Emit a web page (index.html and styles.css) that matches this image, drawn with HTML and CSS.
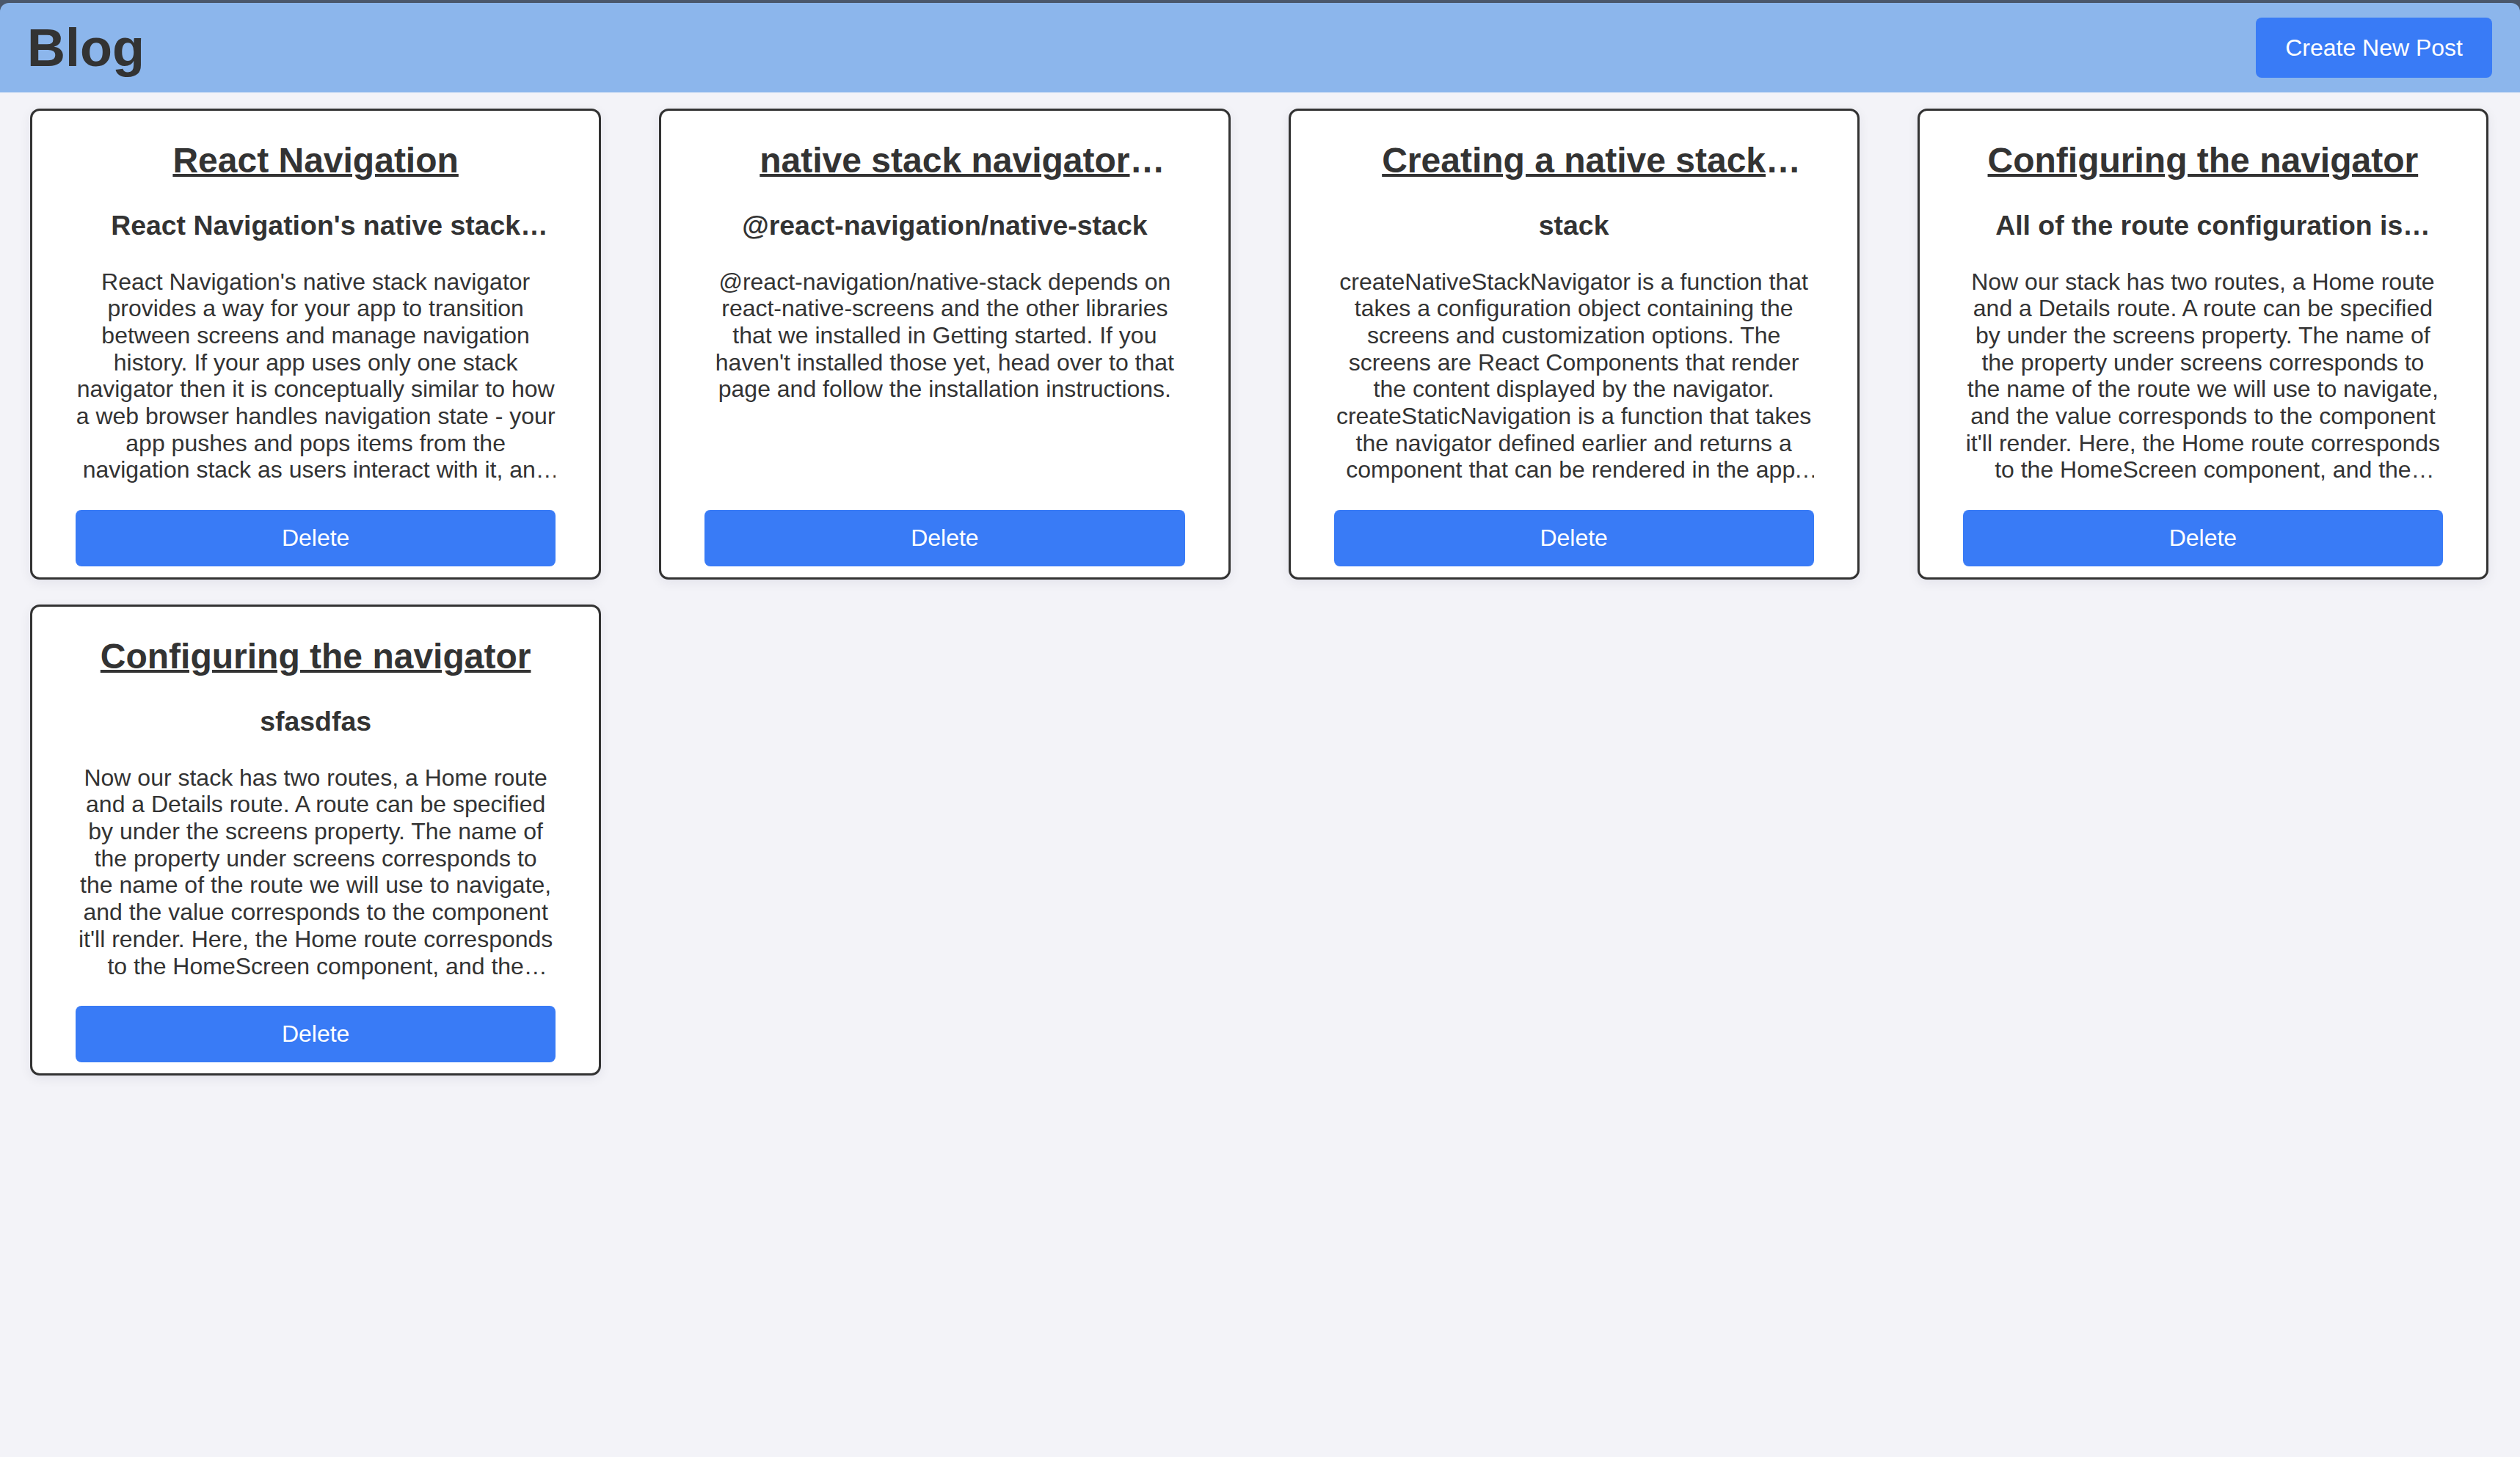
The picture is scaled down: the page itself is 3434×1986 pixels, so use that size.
FILE: index.html
```html
<!DOCTYPE html>
<html lang="en">
<head>
<meta charset="utf-8">
<title>Blog</title>
<link rel="stylesheet" href="styles.css">
</head>
<body>
<div class="topbar">
  <header class="header">
    <h1 class="brand">Blog</h1>
    <button class="create-btn">Create New Post</button>
  </header>
</div>
<main class="grid">
  <article class="card">
    <h2 class="title"><a href="#">React Navigation</a></h2>
    <h3 class="subtitle">React Navigation's native stack<span class="ell">…</span></h3>
    <div class="body-wrap">
      <p class="body">React Navigation's native stack navigator provides a way for your app to transition between screens and manage navigation history. If your app uses only one stack navigator then it is conceptually similar to how a web browser handles navigation state - your app pushes and pops items from the navigation stack as users interact with it, and this results in the user seeing different screens.</p>
    </div>
    <button class="delete">Delete</button>
  </article>
  <article class="card">
    <h2 class="title"><a href="#">native stack navigator</a><span class="ell">…</span></h2>
    <h3 class="subtitle">@react-navigation/native-stack</h3>
    <div class="body-wrap">
      <p class="body">@react-navigation/native-stack depends on react-native-screens and the other libraries that we installed in Getting started. If you haven't installed those yet, head over to that page and follow the installation instructions.</p>
    </div>
    <button class="delete">Delete</button>
  </article>
  <article class="card">
    <h2 class="title"><a href="#">Creating a native stack</a><span class="ell">…</span></h2>
    <h3 class="subtitle">stack</h3>
    <div class="body-wrap">
      <p class="body">createNativeStackNavigator is a function that takes a configuration object containing the screens and customization options. The screens are React Components that render the content displayed by the navigator. createStaticNavigation is a function that takes the navigator defined earlier and returns a component that can be rendered in the app. It's only called once in your app.</p>
    </div>
    <button class="delete">Delete</button>
  </article>
  <article class="card">
    <h2 class="title"><a href="#">Configuring the navigator</a></h2>
    <h3 class="subtitle">All of the route configuration is<span class="ell ell-sp">…</span></h3>
    <div class="body-wrap">
      <p class="body">Now our stack has two routes, a Home route and a Details route. A route can be specified by under the screens property. The name of the property under screens corresponds to the name of the route we will use to navigate, and the value corresponds to the component it'll render. Here, the Home route corresponds to the HomeScreen component, and the Details route corresponds to the DetailsScreen component.</p>
    </div>
    <button class="delete">Delete</button>
  </article>
  <article class="card">
    <h2 class="title"><a href="#">Configuring the navigator</a></h2>
    <h3 class="subtitle">sfasdfas</h3>
    <div class="body-wrap">
      <p class="body">Now our stack has two routes, a Home route and a Details route. A route can be specified by under the screens property. The name of the property under screens corresponds to the name of the route we will use to navigate, and the value corresponds to the component it'll render. Here, the Home route corresponds to the HomeScreen component, and the Details route corresponds to the DetailsScreen component.</p>
    </div>
    <button class="delete">Delete</button>
  </article>
</main>
</body>
</html>
```
FILE: styles.css
```css
html, body {
  margin: 0;
  padding: 0;
  background: #f3f3f8;
}

body {
  min-height: 100vh;
  font-family: "Liberation Sans", Arial, Helvetica, sans-serif;
  color: #333;
}

.topbar {
  background: #4a576b;
  padding-top: 4px;
}

.header {
  box-sizing: border-box;
  height: 122px;
  background: #8cb6ec;
  border-radius: 12px 12px 0 0;
  display: flex;
  align-items: center;
  justify-content: space-between;
  padding: 0 38px 0 37px;
}

.brand {
  margin: 0;
  font-size: 72px;
  font-weight: 700;
  line-height: 1;
  color: #333;
}

.create-btn {
  height: 82px;
  padding: 0 40px;
  border: 0;
  border-radius: 8px;
  background: #397bf6;
  color: #fff;
  font-family: inherit;
  font-size: 32px;
  line-height: normal;
  cursor: pointer;
}

.grid {
  display: grid;
  grid-template-columns: repeat(4, minmax(0, 1fr));
  column-gap: 79px;
  row-gap: 34px;
  padding: 22px 43px 40px 41px;
  align-items: stretch;
}

.card {
  min-width: 0;
  background: #fff;
  border: 3px solid #333;
  border-radius: 13px;
  box-shadow: 0 4px 16px rgba(20, 20, 60, 0.07);
  padding: 40px 59px 15px;
  display: flex;
  flex-direction: column;
}

.title {
  margin: 0;
  font-size: 48px;
  font-weight: 700;
  line-height: 55px;
  text-align: center;
  white-space: nowrap;
  color: #333;
}

.title a {
  color: #333;
  text-decoration: underline;
  text-decoration-thickness: 4px;
  text-underline-offset: 2px;
}

.ell {
  margin-right: -1em;
}

.ell-sp {
  margin-right: -0.722em;
}

.subtitle {
  margin: 39.5px 0 0;
  font-size: 37.44px;
  font-weight: 700;
  line-height: 43px;
  text-align: center;
  white-space: nowrap;
  color: #333;
}

.body-wrap {
  flex: 1;
  margin-top: 37px;
}

.body {
  margin: 0;
  font-size: 32px;
  line-height: 36.7px;
  text-align: center;
  color: #333;
  display: -webkit-box;
  -webkit-box-orient: vertical;
  -webkit-line-clamp: 8;
  overflow: hidden;
}

.delete {
  margin-top: 36px;
  width: 100%;
  height: 77px;
  border: 0;
  border-radius: 8px;
  background: #397bf6;
  color: #fff;
  font-family: inherit;
  font-size: 32px;
  cursor: pointer;
}
```
